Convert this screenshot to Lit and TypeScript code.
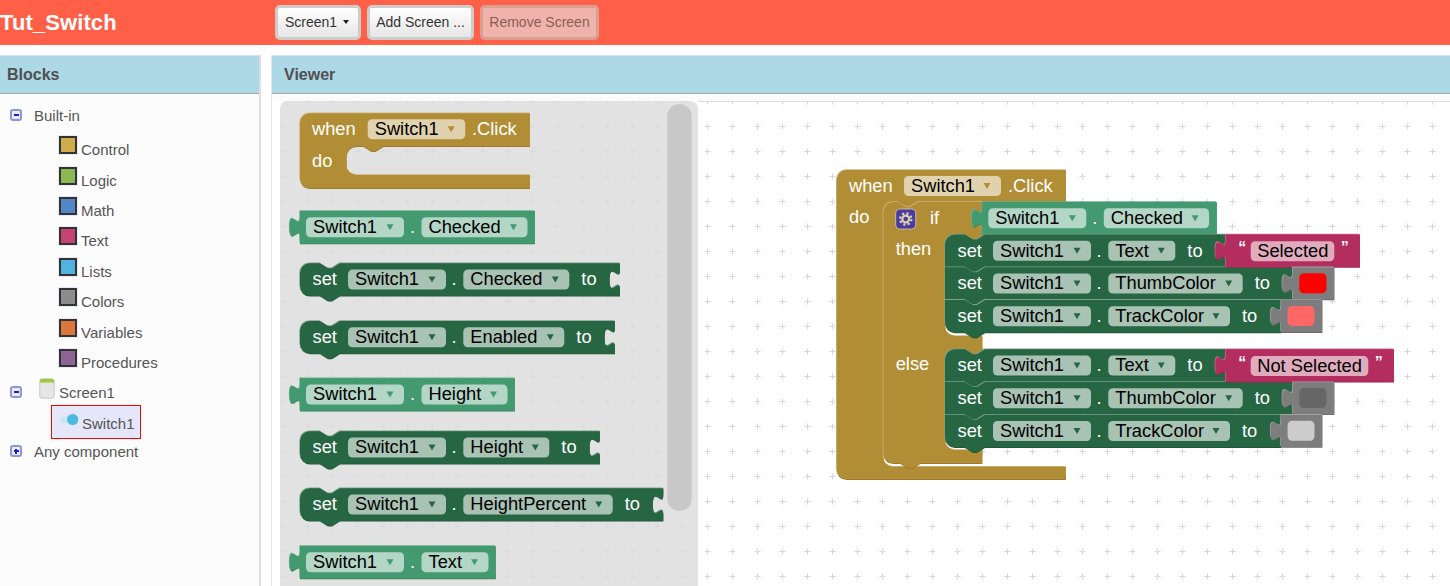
import { LitElement, css, html, svg } from "lit";
import { customElement } from "lit/decorators.js";

// block palette: fill, top edge, bottom edge
type Tone = { fill: string; light: string; dark: string };
const BROWN: Tone = { fill: "#b18e35", light: "#cdb67c", dark: "#94762b" };
const GETTER: Tone = { fill: "#439970", light: "#6dae8f", dark: "#37805d" };
const SETTER: Tone = { fill: "#266643", light: "#7ea08e", dark: "#1f5538" };
const MAROON: Tone = { fill: "#b32d5e", light: "#cb6f91", dark: "#95254e" };
const GREY: Tone = { fill: "#7d7d7d", light: "#a3a3a3", dark: "#686868" };

const ROW = 32.5;
const TAB_DOWN = "v6.5 c0,13 -10.4,-10.4 -10.4,9.75 s10.4,-3.25 10.4,9.75";
const TAB_UP = "c0,-13 -10.4,10.4 -10.4,-9.75 s10.4,3.25 10.4,-9.75";
const NOTCH_R = "l8,5 4,0 8,-5";
const NOTCH_L = "l-8,5 -4,0 -8,-5";

const shape = (d: string, t: Tone) => svg`
  <path d=${d} fill=${t.dark} transform="translate(0 .8)"></path>
  <path d=${d} fill=${t.light} transform="translate(-.7 -.8)"></path>
  <path d=${d} fill=${t.fill}></path>`;

const label = (x: number, y: number, s: string) => svg`<text class="lbl" x=${x} y=${y}>${s}</text>`;

const field = (x: number, y: number, w: number, s: string, arrow: string) => svg`
  <rect class="fld" x=${x} y=${y} width=${w} height="20" rx="4.5"></rect>
  <text class="fldt" x=${x + 7} y=${y + 15.8}>${s}</text>
  <path d="M${x + w - 17.5} ${y + 7}h7l-3.5 6z" fill=${arrow}></path>`;

function getter(x: number, y: number, w: number, prop: string, propW: number) {
  const d = `M${x} ${y}H${x + w}V${y + ROW}H${x}V${y + 26}${TAB_UP}Z`;
  return svg`${shape(d, GETTER)}
    ${field(x + 6, y + 6.3, 98, "Switch1", GETTER.fill)}
    ${label(x + 110, y + 22, ".")}
    ${field(x + 121.5, y + 6.3, propW, prop, GETTER.fill)}`;
}

function setter(x: number, y: number, w: number, prop: string, propW: number, roundTop = true, roundBottom = true) {
  const r = x + w;
  const b = y + ROW;
  const top = roundTop ? `M${x} ${y + 10}a10,10 0 0 1 10,-10` : `M${x} ${y}`;
  const bottom = roundBottom ? `H${x + 10}a10,10 0 0 1 -10,-10` : `H${x}`;
  const d = `${top}H${x + 20}${NOTCH_R}H${r}${TAB_DOWN}V${b}H${x + 40}${NOTCH_L}${bottom}Z`;
  return svg`${shape(d, SETTER)}
    ${label(x + 12.5, y + 22, "set")}
    ${field(x + 48, y + 6.3, 98, "Switch1", SETTER.fill)}
    ${label(x + 151.5, y + 22, ".")}
    ${field(x + 163.3, y + 6.3, propW, prop, SETTER.fill)}
    ${label(x + 163.3 + propW + 12, y + 22, "to")}`;
}

function valueShape(x: number, y: number, w: number, h: number, t: Tone) {
  return shape(`M${x} ${y}H${x + w}V${y + h}H${x}V${y + 26}${TAB_UP}Z`, t);
}

function textBlock(x: number, y: number, w: number, s: string, fieldW: number) {
  return svg`${valueShape(x, y, w, ROW, MAROON)}
    <text class="quote" x=${x + 12.5} y=${y + 18.5}>“</text>
    <rect class="fld" x=${x + 25} y=${y + 6.8} width=${fieldW} height="20" rx="4.5"></rect>
    <text class="fldt" x=${x + 31.5} y=${y + 22.6}>${s}</text>
    <text class="quote" x=${x + 25 + fieldW + 6.5} y=${y + 18.5}>”</text>`;
}

function colorBlock(x: number, y: number, w: number, color: string) {
  return svg`${valueShape(x, y, w, 32, GREY)}
    <rect x=${x + 6.6} y=${y + 5.8} width=${w - 14.4} height="20" rx="4.5" fill=${color}></rect>`;
}

// plain "when ... do" hat with a single statement gap
function whenBlock(x: number, y: number, w: number, topH: number, gapB: number, bottom: number) {
  const g = x + 46.5;
  const r = x + w;
  const d = `M${x} ${y + 10}a10,10 0 0 1 10,-10H${r}V${y + topH}H${g + 37}${NOTCH_L}H${g + 10}a10,10 0 0 0 -10,10
    V${gapB - 10}a10,10 0 0 0 10,10H${r}V${bottom}H${x + 10}a10,10 0 0 1 -10,-10Z`;
  return shape(d, BROWN);
}

function ifBlock() {
  const x = 883.3;
  const y = 202;
  const d = `M${x} ${y + 10}a10,10 0 0 1 10,-10H${x + 15}${NOTCH_R}H982.3${TAB_DOWN}V235H985${NOTCH_L}H955a10,10 0 0 0 -10,10
    V326a10,10 0 0 0 10,10H982.3V349.3H985${NOTCH_L}H955a10,10 0 0 0 -10,10
    V440a10,10 0 0 0 10,10H982.3V463.3H${x + 37}${NOTCH_L}H${x + 10}a10,10 0 0 1 -10,-10Z`;
  return shape(d, BROWN);
}

const gear = (cx: number, cy: number) => svg`
  <rect x=${cx - 10} y=${cy - 10} width="20" height="20" rx="4" fill="#4b3aa0" stroke="#d9cfa8" stroke-width=".8"></rect>
  <circle cx=${cx} cy=${cy} r="5.6" fill="none" stroke="#d8ceb0" stroke-width="2.4" stroke-dasharray="2.2 2.2"></circle>
  <circle cx=${cx} cy=${cy} r="3.4" fill="none" stroke="#d8ceb0" stroke-width="2.2"></circle>`;

const CATEGORIES = [
  { name: "Control", color: "#cfac4c" },
  { name: "Logic", color: "#8cb852" },
  { name: "Math", color: "#5087c4" },
  { name: "Text", color: "#c4446f" },
  { name: "Lists", color: "#51b3df" },
  { name: "Colors", color: "#8c8c8c" },
  { name: "Variables", color: "#dc763a" },
  { name: "Procedures", color: "#8d6494" },
];

@customElement("app-root")
export class AppRoot extends LitElement {
  static override styles = css`
    :host {
      display: block;
      width: 1450px;
      height: 586px;
      overflow: hidden;
      background: #fff;
      font-family: "Liberation Sans", Arial, sans-serif;
    }

    .top {
      height: 45px;
      background: #ff6047;
      display: flex;
      align-items: center;
    }
    .title {
      width: 275px;
      color: #fff;
      font-size: 22px;
      font-weight: bold;
      letter-spacing: 0.1px;
    }
    .btns {
      display: flex;
      gap: 6px;
    }
    .btn {
      box-sizing: border-box;
      height: 35px;
      padding-bottom: 2px;
      border: 3px solid #ccc;
      border-radius: 5px;
      background: linear-gradient(#fff, #e6e6e6);
      color: #333;
      font-size: 14px;
      display: flex;
      align-items: center;
      justify-content: center;
    }
    .btn.screen { width: 86px; gap: 6px; padding-right: 2px; }
    .btn.add { width: 107px; }
    .btn.remove {
      width: 119px;
      background: #efb3ab;
      border-color: #d99f95;
      color: #8a5e58;
    }
    .caret {
      width: 0;
      height: 0;
      border-left: 3px solid transparent;
      border-right: 3px solid transparent;
      border-top: 4px solid #222;
    }

    .main {
      margin-top: 10px;
      height: 531px;
      display: flex;
    }
    .panel {
      width: 259px;
      border-right: 2px solid #dedede;
      background: #fcfcfc;
      flex: none;
    }
    .head {
      box-sizing: border-box;
      height: 39px;
      background: #add8e6;
      border-top: 1px solid #d5e6ec;
      border-bottom: 1px solid #aaa;
      color: #505050;
      font-size: 16px;
      font-weight: bold;
      display: flex;
      align-items: center;
    }
    .panel .head { padding-left: 7px; }

    .tree {
      padding-top: 6px;
      color: #555;
      font-size: 15px;
    }
    .row {
      display: flex;
      align-items: center;
      height: 30px;
    }
    .row.root { padding-left: 10px; margin-bottom: 4.6px; }
    .toggle {
      box-sizing: border-box;
      width: 12px;
      height: 12px;
      border: 2px solid #9094d0;
      border-radius: 3px;
      background: #eaebfa;
      position: relative;
      margin-right: 12px;
      flex: none;
    }
    .toggle::before {
      content: "";
      position: absolute;
      left: 1.5px;
      right: 1.5px;
      top: 3px;
      height: 2px;
      background: #1c1cd0;
    }
    .toggle.plus::after {
      content: "";
      position: absolute;
      top: 1.5px;
      bottom: 1.5px;
      left: 3px;
      width: 2px;
      background: #1c1cd0;
    }
    .row.cat {
      height: 30.4px;
      padding-left: 59px;
      gap: 4px;
    }
    .swatch {
      box-sizing: border-box;
      width: 18px;
      height: 18px;
      border: 2px solid #333;
      box-shadow: 0 0 0 1px #e6eaf4;
      margin-top: -9px;
      flex: none;
    }
    .row.screen {
      height: 30.4px;
      padding-left: 10px;
    }
    .row.screen .toggle { margin-right: 17px; margin-top: -2px; }
    .screen-icon { margin-top: -8px; margin-right: 4px; flex: none; }
    .row.selected {
      box-sizing: border-box;
      width: 90px;
      height: 34px;
      margin: -3px 0 0 51px;
      padding: 3px 0 0 8px;
      border: 1px solid #f00;
      background: #e4e6f9;
      gap: 3px;
    }
    .row.selected svg { margin-top: -8px; flex: none; }
    .row.any {
      padding-left: 10px;
      height: 28px;
      margin-top: -2px;
    }

    .viewer {
      flex: 1;
      margin-left: 10px;
      min-width: 0;
      border-left: 1px solid #e6e6e6;
      background: linear-gradient(#fbfbfb 46px, #fff 46px);
    }
    .viewer .head { padding-left: 12px; }
    .canvas {
      display: block;
      margin: 7px 0 0 8px;
      width: 1170px;
      height: 485px;
    }
    .lbl { fill: #fff; font: 18.3px "Liberation Sans", Arial, sans-serif; }
    .fldt { fill: #000; font: 18.3px "Liberation Sans", Arial, sans-serif; }
    .fld { fill: #fff; fill-opacity: 0.6; }
    .quote { fill: #fff; font: bold 16px "Liberation Sans", Arial, sans-serif; }
  `;

  private renderBlocks() {
    return svg`
      ${whenBlock(300, 113.3, 230, 33, 175, 188.3)}
      ${label(312, 134.5, "when")}
      ${field(367.7, 119.3, 97.5, "Switch1", BROWN.fill)}
      ${label(472, 134.5, ".Click")}
      ${label(312, 166.7, "do")}

      ${getter(300, 211, 235, "Checked", 106)}
      ${setter(300, 263.3, 320, "Checked", 106)}
      ${setter(300, 321, 315, "Enabled", 101)}
      ${getter(300, 378.3, 215, "Height", 86)}
      ${setter(300, 431.2, 300, "Height", 86)}
      ${setter(300, 488.3, 363.3, "HeightPercent", 149.4)}
      ${getter(300, 546, 195.7, "Text", 67)}

      ${whenBlock(836.7, 170, 229.3, 32, 466.7, 479.3)}
      ${label(849, 191.7, "when")}
      ${field(904, 176, 97, "Switch1", BROWN.fill)}
      ${label(1008, 191.7, ".Click")}
      ${label(849, 223, "do")}

      ${ifBlock()}
      ${gear(905.7, 219)}
      ${label(930, 224, "if")}
      ${label(895.7, 255, "then")}
      ${label(895.7, 370, "else")}
      ${getter(982.3, 202, 234.4, "Checked", 105.3)}

      ${setter(945, 234.5, 280.7, "Text", 67, true, false)}
      ${setter(945, 267.2, 347.7, "ThumbColor", 134.4, false, false)}
      ${setter(945, 299.9, 336, "TrackColor", 121.7, false, true)}
      ${textBlock(1225.7, 234.5, 134.3, "Selected", 83.6)}
      ${colorBlock(1292.7, 267.4, 41.6, "#ff0000")}
      ${colorBlock(1281, 300.1, 41.3, "#ff6666")}

      ${setter(945, 349.3, 280.7, "Text", 67, true, false)}
      ${setter(945, 382, 347.7, "ThumbColor", 134.4, false, false)}
      ${setter(945, 414.7, 336, "TrackColor", 121.7, false, true)}
      ${textBlock(1225.7, 349.3, 168.3, "Not Selected", 117.6)}
      ${colorBlock(1292.7, 382.2, 41.6, "#666666")}
      ${colorBlock(1281, 414.9, 41.3, "#cccccc")}
    `;
  }

  override render() {
    return html`
      <div class="top">
        <div class="title">Tut_Switch</div>
        <div class="btns">
          <div class="btn screen">Screen1<span class="caret"></span></div>
          <div class="btn add">Add Screen ...</div>
          <div class="btn remove">Remove Screen</div>
        </div>
      </div>
      <div class="main">
        <section class="panel">
          <div class="head">Blocks</div>
          <div class="tree">
            <div class="row root"><span class="toggle"></span>Built-in</div>
            ${CATEGORIES.map(
              (c) => html`<div class="row cat">
                <span class="swatch" style="background:${c.color}"></span>${c.name}
              </div>`
            )}
            <div class="row screen">
              <span class="toggle"></span>
              <svg class="screen-icon" width="16" height="21" viewBox="0 0 16 21">
                <rect x=".8" y=".8" width="14.4" height="19.4" rx="2" fill="#e6e6e6" stroke="#c6c6c6"></rect>
                <path d="M1 3a2 2 0 0 1 2-2h10a2 2 0 0 1 2 2v1.5H1z" fill="#a4c639"></path>
              </svg>
              Screen1
            </div>
            <div class="row selected">
              <svg width="19" height="13" viewBox="0 0 19 13">
                <rect x="0" y="3" width="14" height="7" rx="3.5" fill="#c9e6f4"></rect>
                <circle cx="12.7" cy="6.5" r="5.6" fill="#4db8e0"></circle>
              </svg>
              Switch1
            </div>
            <div class="row any"><span class="toggle plus"></span>Any component</div>
          </div>
        </section>
        <section class="viewer">
          <div class="head">Viewer</div>
          <svg class="canvas" viewBox="280 101 1170 485">
            <defs>
              <pattern id="grid" x="-5" y="-11" width="25" height="25" patternUnits="userSpaceOnUse">
                <path d="M12.5 9.5V15.5M9.5 12.5H15.5" stroke="#d6d6d6" stroke-width="1" fill="none"></path>
              </pattern>
              <pattern id="grid2" x="-5" y="-11" width="25" height="25" patternUnits="userSpaceOnUse">
                <path d="M12.5 9.5V15.5M9.5 12.5H15.5" stroke="#dadada" stroke-width="1" fill="none"></path>
              </pattern>
            </defs>
            <rect x="698" y="101" width="752" height="485" fill="#fff"></rect>
            <rect x="698" y="101" width="752" height="485" fill="url(#grid)"></rect>
            <rect x="698" y="101" width="752" height="1" fill="#ddd"></rect>
            <path d="M288 101H690a8 8 0 0 1 8 8V586H280V109a8 8 0 0 1 8-8z" fill="#e2e2e2"></path>
            <path d="M288 101H690a8 8 0 0 1 8 8V586H280V109a8 8 0 0 1 8-8z" fill="url(#grid2)"></path>
            <rect x="667.3" y="104" width="24.4" height="407" rx="12" fill="#c8c8c8"></rect>
            ${this.renderBlocks()}
          </svg>
        </section>
      </div>
    `;
  }
}
